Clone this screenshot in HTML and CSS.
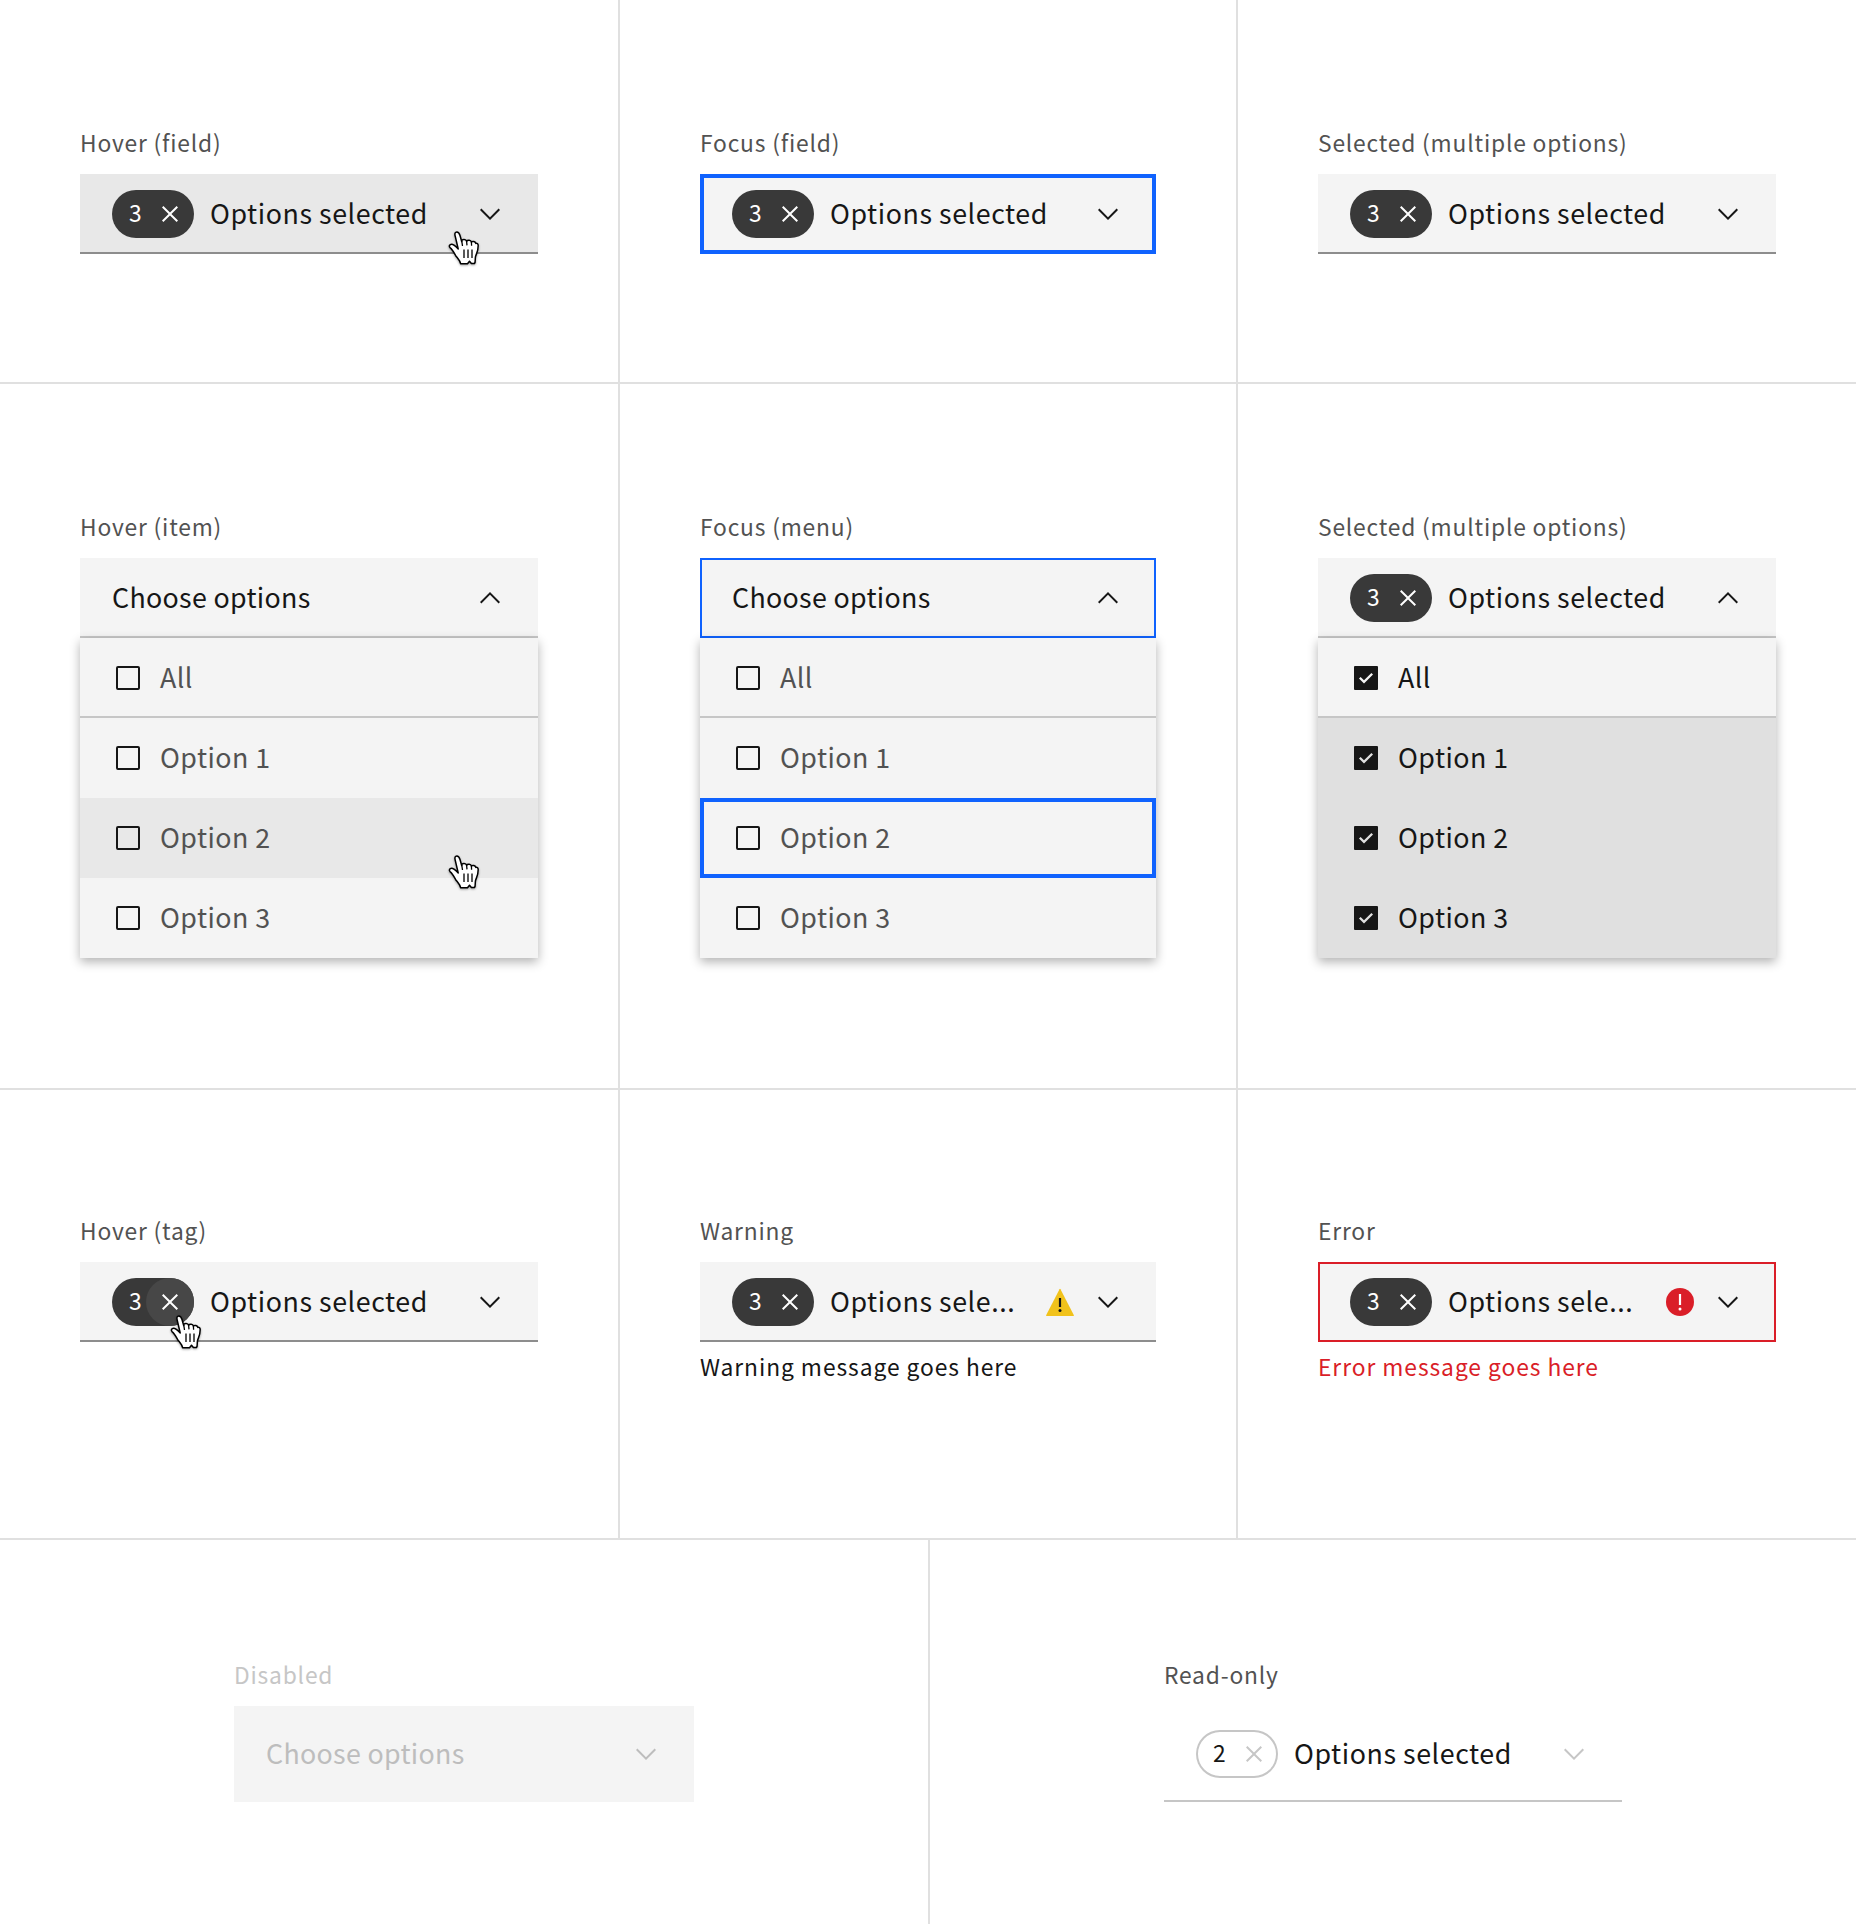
FILE: index.html
```html
<!DOCTYPE html>
<html lang="en">
<head>
<meta charset="utf-8">
<title>Multiselect states</title>
<link rel="stylesheet" href="styles.css">
</head>
<body>
<svg class="sprite" aria-hidden="true">
  <symbol id="chevron" viewBox="0 0 16 16"><path d="M8 11 3 6 3.7 5.3 8 9.6 12.3 5.3 13 6z"/></symbol>
  <symbol id="chevron-up" viewBox="0 0 16 16"><path d="M8 5 13 10 12.3 10.7 8 6.4 3.7 10.7 3 10z"/></symbol>
  <symbol id="close" viewBox="0 0 16 16"><path d="M12 4.7 11.3 4 8 7.3 4.7 4 4 4.7 7.3 8 4 11.3 4.7 12 8 8.7 11.3 12 12 11.3 8.7 8z"/></symbol>
  <symbol id="box" viewBox="0 0 32 32"><rect x="5" y="5" width="22" height="22" rx="1" fill="none" stroke="currentColor" stroke-width="2"/></symbol>
  <symbol id="box-checked" viewBox="0 0 32 32"><path d="M27 4H5a1 1 0 0 0-1 1V27a1 1 0 0 0 1 1H27a1 1 0 0 0 1-1V5a1 1 0 0 0-1-1ZM14 21.5 9 16.54 10.59 15 14 18.35 21.41 11 23 12.58Z"/></symbol>
  <symbol id="warning" viewBox="0 0 32 32"><path fill="#f1c21b" d="M15.5 3.2a.6.6 0 0 1 1 0L29.9 29.2A.6.6 0 0 1 29.4 30H2.6a.6.6 0 0 1-.5-.8z"/><path d="M14.9 12h2.2v9h-2.2z"/><circle cx="16" cy="24.6" r="1.5"/></symbol>
  <symbol id="error" viewBox="0 0 32 32"><circle cx="16" cy="16" r="14" fill="#da1e28"/><path fill="#fff" d="M14.9 8h2.2v11h-2.2z"/><circle cx="16" cy="23" r="1.5" fill="#fff"/></symbol>
  <symbol id="hand" viewBox="0 0 32 35"><path fill="#fff" stroke="#000" stroke-width="1.5" stroke-linejoin="round" d="M10.2 18 7.2 5.2C6.4 2.4 7.2 1 8.8 1s2.5 1.200 3.200 3.500l1.700 6V9.600c.6-1.600 4.300-1.600 4.900.6 1-1.400 4.200-1.300 4.800.8 1.200-1 3.800-.6 4.400 1.400 1-.4 2.400.2 2.400 2.200 0 5.500-1.600 7.600-2.600 10.600-.5 1.800-.2 4-.6 6.300l-.6 1h-3l-1.900-2.300-2 2.500h-6.900c-.4-3-3.100-5.500-4.900-8C5.900 21.200 4.400 18.500 2 16.600c-1.300-1.400-.4-3.400 1.600-3.400 2.600 0 4.600 2.700 6.600 4.800z"/><path fill="none" stroke="#000" stroke-width="1.300" d="M16 18.500V27M20 18.500V27M24 18.500V27M13.700 9.600l.8 5.400M18.600 10.200l.4 4.200M23.400 11l.2 3.700"/></symbol>
</svg>

<main class="board">
  <section class="row row-fields">
    <div class="cell">
      <div class="label">Hover (field)</div>
      <div class="field is-hover">
        <span class="tag"><span class="count">3</span><span class="clear"><svg class="icon"><use href="#close"/></svg></span></span>
        <span class="value">Options selected</span>
        <svg class="icon"><use href="#chevron"/></svg>
        <svg class="cursor on-field"><use href="#hand"/></svg>
      </div>
    </div>
    <div class="cell">
      <div class="label">Focus (field)</div>
      <div class="field is-focus">
        <span class="tag"><span class="count">3</span><span class="clear"><svg class="icon"><use href="#close"/></svg></span></span>
        <span class="value">Options selected</span>
        <svg class="icon"><use href="#chevron"/></svg>
      </div>
    </div>
    <div class="cell">
      <div class="label">Selected (multiple options)</div>
      <div class="field">
        <span class="tag"><span class="count">3</span><span class="clear"><svg class="icon"><use href="#close"/></svg></span></span>
        <span class="value">Options selected</span>
        <svg class="icon"><use href="#chevron"/></svg>
      </div>
    </div>
  </section>

  <section class="row row-menus">
    <div class="cell">
      <div class="label">Hover (item)</div>
      <div class="field is-open">
        <span class="value prompt">Choose options</span>
        <svg class="icon"><use href="#chevron-up"/></svg>
      </div>
      <ul class="menu">
        <li class="item all"><svg class="icon"><use href="#box"/></svg><span>All</span></li>
        <li class="item"><svg class="icon"><use href="#box"/></svg><span>Option 1</span></li>
        <li class="item is-hover"><svg class="icon"><use href="#box"/></svg><span>Option 2</span><svg class="cursor on-item"><use href="#hand"/></svg></li>
        <li class="item"><svg class="icon"><use href="#box"/></svg><span>Option 3</span></li>
      </ul>
    </div>
    <div class="cell">
      <div class="label">Focus (menu)</div>
      <div class="field is-open is-active">
        <span class="value prompt">Choose options</span>
        <svg class="icon"><use href="#chevron-up"/></svg>
      </div>
      <ul class="menu">
        <li class="item all"><svg class="icon"><use href="#box"/></svg><span>All</span></li>
        <li class="item"><svg class="icon"><use href="#box"/></svg><span>Option 1</span></li>
        <li class="item is-focus"><svg class="icon"><use href="#box"/></svg><span>Option 2</span></li>
        <li class="item"><svg class="icon"><use href="#box"/></svg><span>Option 3</span></li>
      </ul>
    </div>
    <div class="cell">
      <div class="label">Selected (multiple options)</div>
      <div class="field is-open">
        <span class="tag"><span class="count">3</span><span class="clear"><svg class="icon"><use href="#close"/></svg></span></span>
        <span class="value">Options selected</span>
        <svg class="icon"><use href="#chevron-up"/></svg>
      </div>
      <ul class="menu is-selected">
        <li class="item all"><svg class="icon"><use href="#box-checked"/></svg><span>All</span></li>
        <li class="item"><svg class="icon"><use href="#box-checked"/></svg><span>Option 1</span></li>
        <li class="item"><svg class="icon"><use href="#box-checked"/></svg><span>Option 2</span></li>
        <li class="item"><svg class="icon"><use href="#box-checked"/></svg><span>Option 3</span></li>
      </ul>
    </div>
  </section>

  <section class="row row-status">
    <div class="cell">
      <div class="label">Hover (tag)</div>
      <div class="field">
        <span class="tag is-hover"><span class="count">3</span><span class="clear"><svg class="icon"><use href="#close"/></svg></span></span>
        <span class="value">Options selected</span>
        <svg class="icon"><use href="#chevron"/></svg>
        <svg class="cursor on-tag"><use href="#hand"/></svg>
      </div>
    </div>
    <div class="cell">
      <div class="label">Warning</div>
      <div class="field">
        <span class="tag"><span class="count">3</span><span class="clear"><svg class="icon"><use href="#close"/></svg></span></span>
        <span class="value">Options sele...</span>
        <svg class="icon status"><use href="#warning"/></svg>
        <svg class="icon"><use href="#chevron"/></svg>
      </div>
      <div class="helper">Warning message goes here</div>
    </div>
    <div class="cell">
      <div class="label">Error</div>
      <div class="field is-error">
        <span class="tag"><span class="count">3</span><span class="clear"><svg class="icon"><use href="#close"/></svg></span></span>
        <span class="value">Options sele...</span>
        <svg class="icon status"><use href="#error"/></svg>
        <svg class="icon"><use href="#chevron"/></svg>
      </div>
      <div class="helper error-text">Error message goes here</div>
    </div>
  </section>

  <section class="row row-inactive">
    <div class="cell">
      <div class="label is-muted">Disabled</div>
      <div class="field is-disabled">
        <span class="value prompt">Choose options</span>
        <svg class="icon"><use href="#chevron"/></svg>
      </div>
    </div>
    <div class="cell">
      <div class="label">Read-only</div>
      <div class="field is-readonly">
        <span class="tag outline"><span class="count">2</span><span class="clear"><svg class="icon"><use href="#close"/></svg></span></span>
        <span class="value">Options selected</span>
        <svg class="icon"><use href="#chevron"/></svg>
      </div>
    </div>
  </section>
</main>
</body>
</html>
```
FILE: styles.css
```css
* { box-sizing: border-box; }

body {
  margin: 0;
  background: #fff;
  color: #161616;
  font-family: "Noto Sans CJK SC", "Noto Sans", sans-serif;
}

.sprite { display: none; }

.board {
  width: 1856px;
  height: 1924px;
  overflow: hidden;
}

.row {
  display: grid;
  grid-template-columns: 620px 618px 618px;
  border-bottom: 2px solid #e0e0e0;
}
.row-fields { height: 384px; }
.row-menus { height: 706px; }
.row-status { height: 450px; }
.row-inactive {
  height: 384px;
  grid-template-columns: 930px 926px;
  border-bottom: 0;
}

.cell {
  padding: 126px 80px 0;
  border-right: 2px solid #e0e0e0;
}
.cell:last-child { border-right: 0; }
.row-status .cell { padding-top: 124px; }
.row-inactive .cell { padding: 118px 234px 0; }

.label,
.helper {
  height: 32px;
  font-size: 22.8px;
  line-height: 34px;
  white-space: nowrap;
}
.label {
  margin-bottom: 16px;
  color: #525252;
  letter-spacing: 0.81px;
}
.label.is-muted { color: #c6c6c6; }
.helper { margin-top: 8px; letter-spacing: 0.94px; }
.error-text { color: #da1e28; }

.field {
  position: relative;
  display: flex;
  align-items: center;
  height: 80px;
  padding: 0 32px;
  background: #f4f4f4;
  box-shadow: inset 0 -2px #8d8d8d;
}
.field.is-hover { background: #e8e8e8; }
.field.is-focus { box-shadow: inset 0 0 0 4px #0f62fe; }
.field.is-open { box-shadow: inset 0 -2px #c6c6c6; }
.field.is-active { box-shadow: inset 0 0 0 2px #0f62fe; }
.field.is-error { box-shadow: inset 0 0 0 2px #da1e28; }
.field.is-disabled { height: 96px; color: #bdbdbd; box-shadow: none; }
.field.is-readonly {
  height: 96px;
  background: none;
  box-shadow: inset 0 -2px #c6c6c6;
}
.is-readonly > .icon { color: #c6c6c6; }

.value,
.item span {
  flex: 1;
  padding-bottom: 2px;
  font-size: 26.8px;
  line-height: 40px;
  letter-spacing: 0.56px;
  white-space: nowrap;
}
.value.prompt { letter-spacing: 0.32px; }
.item span { letter-spacing: 0.45px; }

.icon {
  display: block;
  flex: none;
  width: 32px;
  height: 32px;
  fill: currentColor;
}
.status { margin-right: 16px; }

.tag {
  display: flex;
  align-items: center;
  width: 82px;
  height: 48px;
  margin-right: 16px;
  padding-left: 17px;
  border-radius: 24px;
  background: #393939;
  color: #fff;
}
.count {
  width: 17px;
  padding-bottom: 2px;
  font-size: 22.8px;
  line-height: 32px;
}
.clear {
  display: grid;
  place-items: center;
  width: 48px;
  height: 48px;
  border-radius: 50%;
}
.tag.is-hover .clear { background: #474747; }
.tag.outline {
  background: #fff;
  color: #161616;
  box-shadow: inset 0 0 0 2px #c6c6c6;
}
.outline .clear { color: #c6c6c6; }

.menu {
  position: relative;
  margin: 0;
  padding: 0;
  list-style: none;
  background: #f4f4f4;
  box-shadow: 0 4px 10px rgba(0, 0, 0, 0.3);
}
.item {
  position: relative;
  display: flex;
  align-items: center;
  gap: 16px;
  height: 80px;
  padding: 0 32px;
  color: #525252;
}
.item .icon { color: #161616; }
.item.all { box-shadow: inset 0 -2px #c6c6c6; }
.item.is-hover { background: #e8e8e8; }
.item.is-focus { box-shadow: inset 0 0 0 4px #0f62fe; }
.is-selected .item { color: #161616; background: #e0e0e0; }
.is-selected .item.all { background: #f4f4f4; }

.cursor {
  position: absolute;
  z-index: 1;
  width: 32px;
  height: 35px;
  filter: drop-shadow(0 1px 1px rgba(0, 0, 0, 0.35));
}
.on-field { left: 368px; top: 57px; }
.on-item { left: 368px; top: 57px; }
.on-tag { left: 90px; top: 53px; }
```
